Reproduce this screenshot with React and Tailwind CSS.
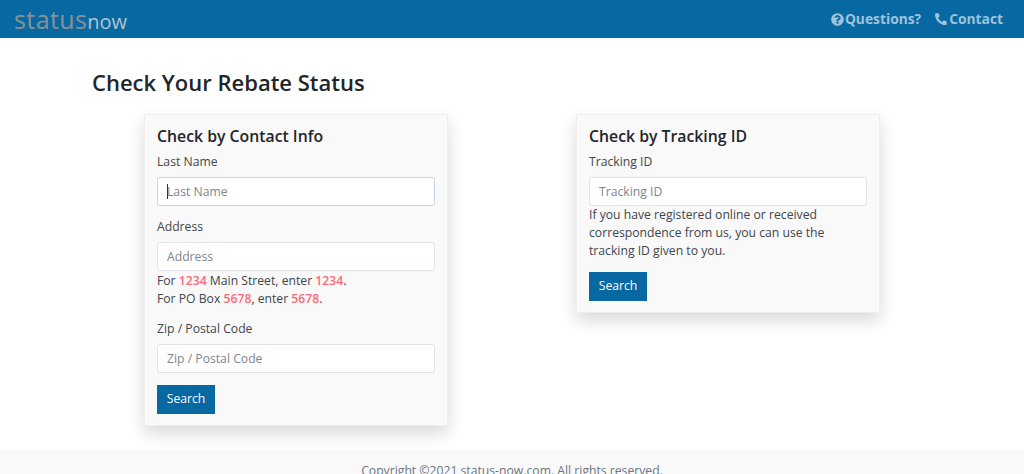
import React from 'react';
import { FaQuestionCircle, FaPhone } from 'react-icons/fa';

const Field = ({ label, caret, focused }) => (
  <div>
    <label className="block text-[12.2px] leading-[20px] text-[#40464c] mb-[5px]">{label}</label>
    <div className="relative">
      <input
        placeholder={label}
        className={`block w-full h-[29px] rounded-[3px] border bg-white px-[9px] text-[12.2px] placeholder:text-[#80868b] outline-none ${focused ? 'border-[#c5d6e8]' : 'border-[#dfe2e8]'}`}
      />
      {caret && <span className="absolute left-[10px] top-[7px] h-[15px] w-px bg-[#333]" />}
    </div>
  </div>
);

const Mark = ({ children }) => <b className="font-semibold text-[#fb6a78]">{children}</b>;

const SearchButton = () => (
  <button className="h-[29px] w-[58px] bg-[#0868a2] text-[12.2px] text-white">Search</button>
);

export default function App() {
  return (
    <div className="min-h-screen bg-white font-['Open_Sans',sans-serif] text-[#40464c]">
      <nav className="flex h-[38px] items-center justify-between bg-[#0868a2] pl-[14px] pr-[21px]">
        <div className="flex items-baseline font-medium leading-none text-[#8a9196]">
          <span className="text-[25px] tracking-[0.4px]">status</span>
          <span className="text-[20px] text-[#b5c3cd]">now</span>
        </div>
        <div className="flex items-center gap-[14px] text-[13.8px] font-bold text-[#9cc3da]">
          <a className="flex items-center gap-[1px]"><FaQuestionCircle className="text-[13px]" />Questions?</a>
          <a className="flex items-center gap-[2px]"><FaPhone className="text-[12px] -scale-x-100" />Contact</a>
        </div>
      </nav>

      <main className="px-[92px] pt-[30px]">
        <h1 className="text-[22px] font-semibold leading-[29px] text-[#212529]">Check Your Rebate Status</h1>
        <div className="mt-[17px] ml-[52px] flex items-start gap-[128px]">
          <section className="w-[304px] border border-[#eee] bg-[#f9f9f9] px-3 pt-[11px] pb-[11px] shadow-[0_8px_16px_rgba(0,0,0,0.15)]">
            <h2 className="text-[15.8px] font-semibold leading-[21px] text-[#212529] mb-[5px]">Check by Contact Info</h2>
            <Field label="Last Name" caret focused />
            <div className="mt-[11px]">
              <Field label="Address" />
              <p className="text-[12.2px] leading-[18px] pt-[1px]">For <Mark>1234</Mark> Main Street, enter <Mark>1234</Mark>.<br />For PO Box <Mark>5678</Mark>, enter <Mark>5678</Mark>.</p>
            </div>
            <div className="mt-[11px]">
              <Field label="Zip / Postal Code" />
            </div>
            <div className="mt-3"><SearchButton /></div>
          </section>
          <section className="w-[304px] border border-[#eee] bg-[#f9f9f9] px-3 pt-[11px] pb-[11px] shadow-[0_8px_16px_rgba(0,0,0,0.15)]">
            <h2 className="text-[15.8px] font-semibold leading-[21px] text-[#212529] mb-[5px]">Check by Tracking ID</h2>
            <Field label="Tracking ID" />
            <p className="text-[12.2px] leading-[18px]">If you have registered online or received correspondence from us, you can use the tracking ID given to you.</p>
            <div className="mt-3"><SearchButton /></div>
          </section>
        </div>
      </main>

      <footer className="mt-[24px] bg-[#f9f9f9] pt-[12px] pb-4 text-center text-[12.2px] leading-[18px] text-[#6c757d]">
        Copyright ©2021 status-now.com. All rights reserved.
      </footer>
    </div>
  );
}
